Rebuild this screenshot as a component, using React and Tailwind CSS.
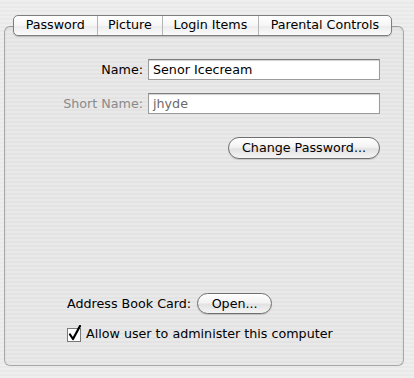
const stripes =
  "bg-[repeating-linear-gradient(180deg,#eeeeee_0px,#eeeeee_2px,#e9e9e9_2px,#e9e9e9_4px)]";
const panelStripes =
  "bg-[repeating-linear-gradient(180deg,#e9e9e9_0px,#e9e9e9_2px,#e3e3e3_2px,#e3e3e3_4px)]";

const tabs = [
  { label: "Password", w: "w-[83px]" },
  { label: "Picture", w: "w-[66px]" },
  { label: "Login Items", w: "w-[96px]" },
  { label: "Parental Controls", w: "w-[134px]" },
];

const AquaButton = ({ children, className }) => (
  <button
    className={
      "rounded-full border border-[#6f6f6f] bg-[linear-gradient(180deg,#ffffff_0%,#f3f3f3_45%,#e2e2e2_55%,#f4f4f4_100%)] shadow-[0_1px_1px_rgba(0,0,0,0.15)] text-[12.7px] leading-none text-black " +
      className
    }
  >
    {children}
  </button>
);

const Field = ({ value, muted }) => (
  <div
    className={
      "flex h-[21px] w-[232px] items-center border border-[#9b9b9b] border-t-[#7d7d7d] bg-white pl-[4px] shadow-[inset_0_1px_1px_rgba(0,0,0,0.18)] text-[12.7px] " +
      (muted ? "text-[#6a6a6a]" : "text-black")
    }
  >
    {value}
  </div>
);

export default function App() {
  return (
    <div
      className={
        "w-[414px] h-[378px] overflow-hidden pt-[15px] " + stripes
      }
      style={{ fontFamily: '"DejaVu Sans", "Open Sans", sans-serif' }}
    >
      <div className="relative z-10 ml-[13px] flex h-[21px] w-[379px] overflow-hidden rounded-[5px] border border-[#7e7e7e] bg-[linear-gradient(180deg,#ffffff_0%,#f6f6f6_50%,#ebebeb_51%,#fbfbfb_100%)] shadow-[0_1px_1px_rgba(0,0,0,0.2)]">
        {tabs.map((t, i) => (
          <div
            key={t.label}
            className={
              "flex items-center justify-center text-[12.7px] leading-none text-black " +
              t.w +
              (i > 0 ? " border-l border-[#b5b5b5]" : "")
            }
          >
            {t.label}
          </div>
        ))}
      </div>

      <div
        className={
          "-mt-[10px] ml-[4px] h-[340px] w-[400px] rounded-[6px] border border-[#a8a8a8] border-t-[#9c9c9c] shadow-[inset_0_1px_2px_rgba(0,0,0,0.08)] pt-[32px] " +
          panelStripes
        }
      >
        <div className="flex items-center">
          <div className="w-[138px] text-right text-[12.7px] text-black">
            Name:
          </div>
          <div className="ml-[5px]">
            <Field value="Senor Icecream" />
          </div>
        </div>

        <div className="mt-[13px] flex items-center">
          <div className="w-[138px] text-right text-[12.7px] text-[#8a8a8a]">
            Short Name:
          </div>
          <div className="ml-[5px]">
            <Field value="jhyde" muted />
          </div>
        </div>

        <div className="mt-[21px] pl-[223px]">
          <AquaButton className="h-[22px] w-[152px]">Change Password...</AquaButton>
        </div>

        <div className="mt-[134px] flex items-center pl-[62px]">
          <span className="text-[12.7px] text-black">Address Book Card:</span>
          <AquaButton className="ml-[6px] h-[21px] w-[75px]">Open...</AquaButton>
        </div>

        <div className="mt-[10px] flex items-center pl-[62px]">
          <svg width="16" height="17" viewBox="0 0 16 17" className="shrink-0">
            <rect x="0.5" y="3.5" width="13" height="13" fill="#fff" stroke="#7a7a7a" />
            <path
              d="M3 9.5 L6 14 L13 1"
              fill="none"
              stroke="#000"
              strokeWidth="2.2"
              strokeLinecap="round"
              strokeLinejoin="round"
            />
          </svg>
          <span className="ml-[3px] text-[12.7px] text-black">
            Allow user to administer this computer
          </span>
        </div>
      </div>
    </div>
  );
}
